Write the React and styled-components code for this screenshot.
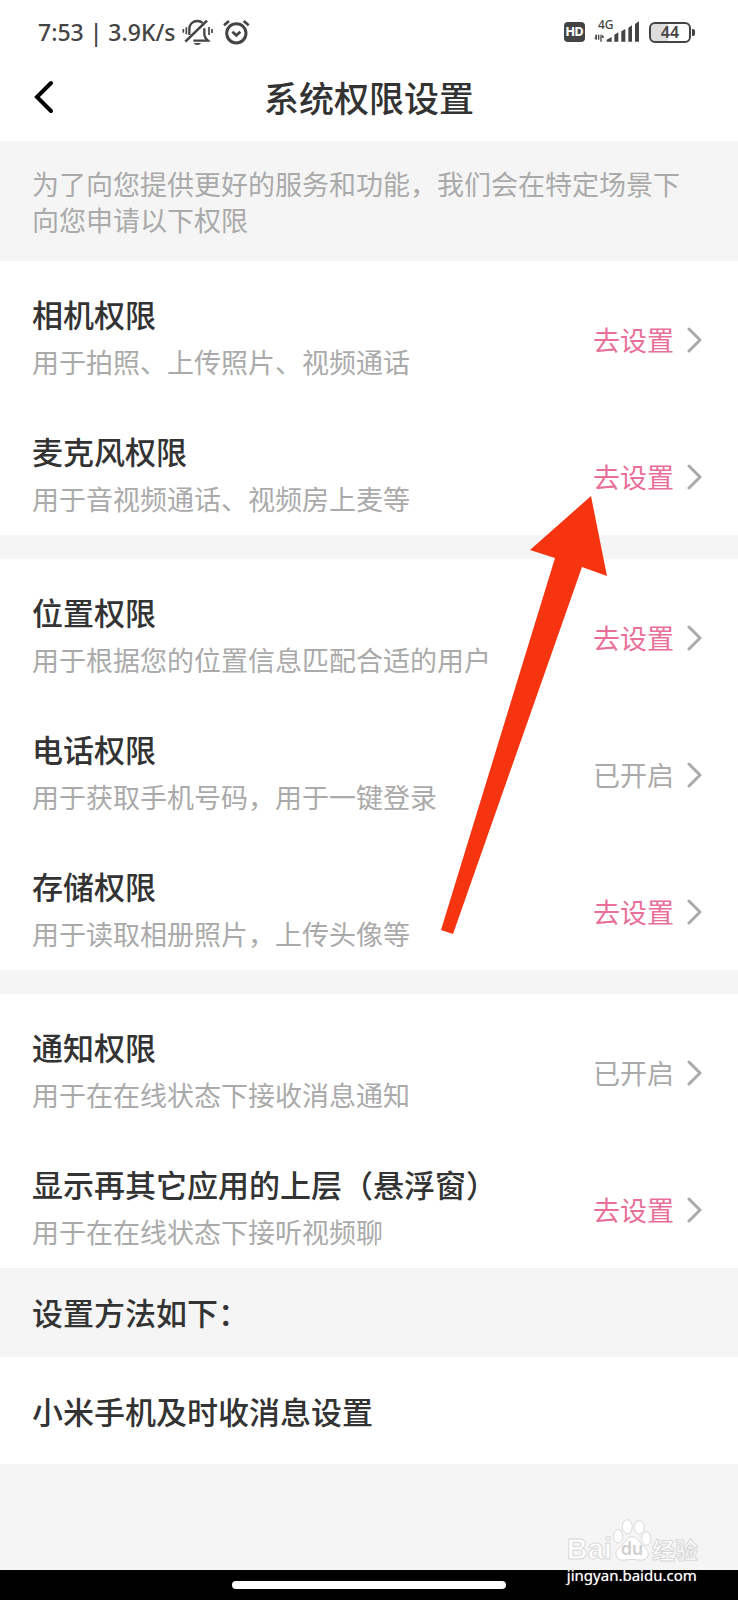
import React, { Fragment } from "react";
import styled, { createGlobalStyle, ThemeProvider } from "styled-components";

const theme = {
  color: {
    white: "#ffffff",
    gray: "#f5f5f5",
    text: "#333333",
    muted: "#aaaaaa",
    pink: "#e96f9b",
    status: "#444444",
    red: "#f73410"
  }
};

const groups = [
  [
    { title: "相机权限", desc: "用于拍照、上传照片、视频通话", enabled: false },
    { title: "麦克风权限", desc: "用于音视频通话、视频房上麦等", enabled: false }
  ],
  [
    { title: "位置权限", desc: "用于根据您的位置信息匹配合适的用户", enabled: false },
    { title: "电话权限", desc: "用于获取手机号码，用于一键登录", enabled: true },
    { title: "存储权限", desc: "用于读取相册照片，上传头像等", enabled: false }
  ],
  [
    { title: "通知权限", desc: "用于在在线状态下接收消息通知", enabled: true },
    {
      title: "显示再其它应用的上层（悬浮窗）",
      desc: "用于在在线状态下接听视频聊",
      enabled: false
    }
  ]
];

const MutedBell = () => (
  <svg width="31" height="26" viewBox="0 0 93 78" fill="none" stroke="currentColor">
    <path d="M4 30v11M13 25v21M81 24v24M90 30v12" strokeWidth="5" />
    <path d="M22 48V30C22 14 34 6 46 6c7 0 13 3 16 6" strokeWidth="7" />
    <path d="M67 28v19c0 8 5 12 11 18H34" strokeWidth="7" />
    <path d="M10 68L75 5" strokeWidth="8" />
    <path d="M35 72h22c-3 8-19 8-22 0z" fill="currentColor" stroke="none" />
  </svg>
);

const Alarm = () => (
  <svg width="27" height="26" viewBox="0 0 81 78" fill="none" stroke="currentColor">
    <circle cx="40" cy="43" r="29" strokeWidth="9" />
    <path d="M28 38l12 11 12-11" strokeWidth="8" />
    <path d="M3 19L18 6M62 6l15 13" strokeWidth="8" />
  </svg>
);

const Signal = () => (
  <svg width="46" height="22" viewBox="0 0 138 66" fill="currentColor">
    <path d="M9 41v15H6L0 50h4v-9zM12 41h4v15h-4zM19 41h4v21h-4zM24 41l6 6v3h-6z" />
    <path d="M38 62V56l15-8v14zM61 62V41l12-7v28zM82 62V31l12-7v38zM103 62V20l11-7v49zM123 62V9l12-8v61z" />
  </svg>
);

const Chevron = () => (
  <svg width="15" height="26" viewBox="0 0 15 26" fill="none">
    <path d="M2 2l11 11L2 24" stroke="#aaaaaa" strokeWidth="3" strokeLinecap="round" strokeLinejoin="round" />
  </svg>
);

const Paw = () => (
  <svg width="40" height="44" viewBox="0 0 120 132" fill="#ffffff" stroke="#d8d8d8" strokeWidth="3">
    <ellipse cx="18" cy="55" rx="14" ry="20" />
    <ellipse cx="46" cy="26" rx="15" ry="21" />
    <ellipse cx="82" cy="28" rx="15" ry="20" />
    <ellipse cx="103" cy="62" rx="14" ry="20" />
    <path d="M60 56c-14 0-19 15-29 25-10 9-21 15-19 28 2 14 13 19 26 17 15-2 29-2 43 0 14 2 26-3 28-17 1-13-10-19-19-28C80 71 76 56 60 56z" />
  </svg>
);

const StatusBar = () => (
  <Status>
    <StatusSide gap={6}>
      <span>7:53 | 3.9K/s</span>
      <StatusSide gap={10}>
        <MutedBell />
        <Alarm />
      </StatusSide>
    </StatusSide>
    <StatusSide gap={9}>
      <HdBadge>HD</HdBadge>
      <SignalBox>
        <Network>4G</Network>
        <Signal />
      </SignalBox>
      <Battery>44</Battery>
    </StatusSide>
  </Status>
);

const Permission = ({ title, desc, enabled }) => (
  <Row type="button">
    <RowText>
      <RowTitle>{title}</RowTitle>
      <RowDesc>{desc}</RowDesc>
    </RowText>
    <Action enabled={enabled}>
      {enabled ? "已开启" : "去设置"}
      <Chevron />
    </Action>
  </Row>
);

export default function App() {
  return (
    <ThemeProvider theme={theme}>
      <Fragment>
        <GlobalStyle />
        <Page lang="zh-CN">
          <StatusBar />
          <Header>
            <BackButton type="button" aria-label="返回">
              <svg width="22" height="34" viewBox="0 0 22 34" fill="none">
                <path d="M18 3L4 17l14 14" stroke="#000000" strokeWidth="4" strokeLinecap="round" />
              </svg>
            </BackButton>
            <HeaderTitle>系统权限设置</HeaderTitle>
          </Header>
          <Notice>为了向您提供更好的服务和功能，我们会在特定场景下向您申请以下权限</Notice>
          <Groups>
            {groups.map((items, i) => (
              <Group key={i}>
                {items.map(item => (
                  <Permission key={item.title} {...item} />
                ))}
              </Group>
            ))}
          </Groups>
          <MethodTitle>设置方法如下：</MethodTitle>
          <MethodItem type="button">小米手机及时收消息设置</MethodItem>
          <Filler />
          <HomeBar>
            <HomeIndicator />
          </HomeBar>
          <Arrow width="166" height="438" viewBox="0 0 166 438">
            <path d="M150 0L166 80 141 71 12 438 0 434 114 62 89 54z" />
          </Arrow>
          <Watermark>
            <Brand>
              <BrandText>Bai</BrandText>
              <PawBox>
                <Paw />
                <PawText>du</PawText>
              </PawBox>
              <BrandText cjk>经验</BrandText>
            </Brand>
            <Site>jingyan.baidu.com</Site>
          </Watermark>
        </Page>
      </Fragment>
    </ThemeProvider>
  );
}

const GlobalStyle = createGlobalStyle`
  * {
    box-sizing: border-box;
  }
  body {
    margin: 0;
    background: #f5f5f5;
    font-family: "Noto Sans CJK SC", sans-serif;
  }
  button {
    border: 0;
    padding: 0;
    background: none;
    font: inherit;
    text-align: left;
    cursor: pointer;
  }
  svg {
    display: block;
    flex: none;
  }
`;

const Page = styled.div`
  position: relative;
  display: flex;
  flex-direction: column;
  min-height: 100vh;
  background: ${props => props.theme.color.gray};
  color: ${props => props.theme.color.text};
`;

const Status = styled.div`
  display: flex;
  justify-content: space-between;
  align-items: center;
  height: 54px;
  padding: 10px 47px 0 38px;
  background: ${props => props.theme.color.white};
  color: ${props => props.theme.color.status};
  font-family: "Noto Sans", sans-serif;
  font-size: 23px;
  font-weight: 500;
  line-height: 32px;
`;

const StatusSide = styled.div.withConfig({ shouldForwardProp: prop => prop !== "gap" })`
  display: flex;
  align-items: center;
  gap: ${props => props.gap}px;
`;

const HdBadge = styled.span`
  width: 21px;
  height: 20px;
  border-radius: 4px;
  background: ${props => props.theme.color.status};
  color: ${props => props.theme.color.white};
  font-family: Inter, sans-serif;
  font-size: 12px;
  font-weight: 800;
  line-height: 20px;
  text-align: center;
`;

const SignalBox = styled.div`
  position: relative;
`;

const Network = styled.span`
  position: absolute;
  left: 4px;
  top: -3px;
  font-size: 12px;
  line-height: 14px;
`;

const Battery = styled.span`
  position: relative;
  width: 42px;
  height: 21px;
  border: 2px solid ${props => props.theme.color.status};
  border-radius: 6px;
  background: linear-gradient(90deg, #dddddd 44%, #ffffff 44%);
  font-family: "Noto Sans", sans-serif;
  font-size: 16px;
  font-weight: 600;
  line-height: 17px;
  text-align: center;

  &::after {
    content: "";
    position: absolute;
    right: -6px;
    top: 5px;
    width: 3px;
    height: 7px;
    border-radius: 0 2px 2px 0;
    background: ${props => props.theme.color.status};
  }
`;

const Header = styled.header`
  display: grid;
  grid-template-columns: 1fr auto 1fr;
  align-items: center;
  height: 87px;
  padding: 0 33px 2px;
  background: ${props => props.theme.color.white};
`;

const BackButton = styled.button`
  justify-self: start;
`;

const HeaderTitle = styled.h1`
  margin: 0;
  font-size: 35px;
  font-weight: 500;
  line-height: 48px;
`;

const Notice = styled.p`
  margin: 0;
  padding: 25px 32px 23px;
  color: ${props => props.theme.color.muted};
  font-size: 27px;
  line-height: 36px;
`;

const Groups = styled.main`
  display: grid;
  gap: 24px;
`;

const Group = styled.section`
  background: ${props => props.theme.color.white};
`;

const Row = styled.button`
  display: flex;
  justify-content: space-between;
  align-items: center;
  width: 100%;
  padding: 31px 36px 15px 32px;
`;

const RowText = styled.span`
  display: grid;
  gap: 5px;
`;

const RowTitle = styled.span`
  color: ${props => props.theme.color.text};
  font-size: 31px;
  font-weight: 500;
  line-height: 44px;
`;

const RowDesc = styled.span`
  color: ${props => props.theme.color.muted};
  font-size: 27px;
  line-height: 42px;
`;

const Action = styled.span.withConfig({ shouldForwardProp: prop => prop !== "enabled" })`
  display: flex;
  align-items: center;
  gap: 13px;
  padding-top: 4px;
  color: ${props => (props.enabled ? props.theme.color.muted : props.theme.color.pink)};
  font-size: 27px;
  line-height: 42px;
  white-space: nowrap;
`;

const MethodTitle = styled.h2`
  margin: 0;
  padding: 22px 32px 23px;
  font-size: 31px;
  font-weight: 500;
  line-height: 44px;
`;

const MethodItem = styled.button`
  && {
    padding: 32px 32px 31px;
    background: ${props => props.theme.color.white};
    color: ${props => props.theme.color.text};
    font-size: 31px;
    font-weight: 500;
    line-height: 44px;
  }
`;

const Filler = styled.div`
  flex: 1;
  min-height: 76px;
`;

const HomeBar = styled.div`
  display: flex;
  justify-content: center;
  align-items: center;
  height: 30px;
  background: #000000;
`;

const HomeIndicator = styled.span`
  width: 37%;
  height: 8px;
  border-radius: 4px;
  background: ${props => props.theme.color.white};
`;

const Arrow = styled.svg`
  position: absolute;
  top: 496px;
  right: 131px;
  fill: ${props => props.theme.color.red};
  pointer-events: none;
`;

const Watermark = styled.div`
  position: absolute;
  right: 40px;
  bottom: 12px;
  color: ${props => props.theme.color.white};
`;

const Brand = styled.div`
  display: flex;
  align-items: flex-end;
  height: 44px;
`;

const BrandText = styled.span.withConfig({ shouldForwardProp: prop => prop !== "cjk" })`
  font-family: ${props => (props.cjk ? '"Noto Sans CJK SC"' : '"Liberation Sans"')}, sans-serif;
  font-size: ${props => (props.cjk ? 23 : 29)}px;
  font-weight: 700;
  line-height: 26px;
  -webkit-text-stroke: 1px #d8d8d8;
`;

const PawBox = styled.span`
  position: relative;
`;

const PawText = styled.span`
  position: absolute;
  left: 0;
  right: 0;
  bottom: 4px;
  color: #d0d0d0;
  font-family: Inter, sans-serif;
  font-size: 18px;
  font-weight: 600;
  line-height: 18px;
  text-align: center;
`;

const Site = styled.div`
  font-family: "Noto Sans", sans-serif;
  font-size: 15px;
  line-height: 26px;
  text-shadow: 0 0 1px #999999;
`;
